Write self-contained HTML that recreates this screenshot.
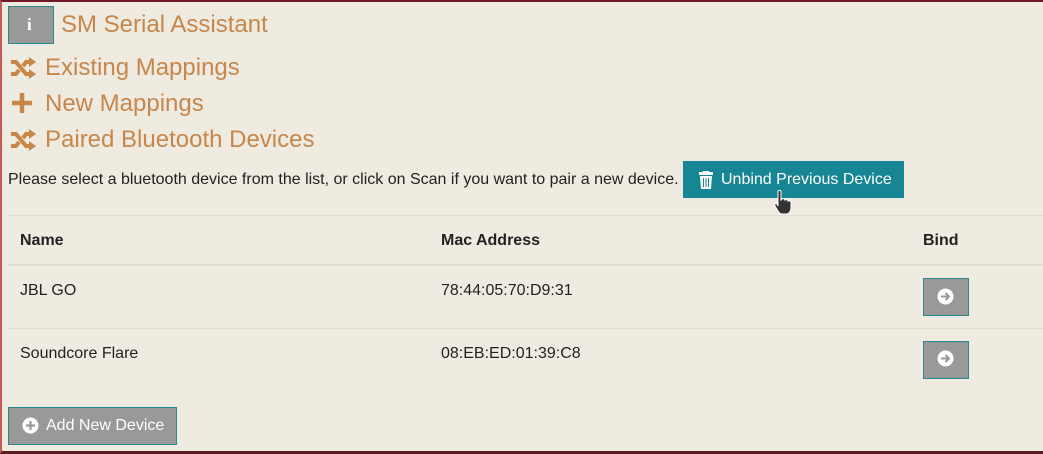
<!DOCTYPE html>
<html><head><meta charset="utf-8"><style>
*{margin:0;padding:0;box-sizing:border-box}
html,body{width:1043px;height:454px;overflow:hidden;background:#efebe0;font-family:"Liberation Sans",sans-serif}
.frame{position:absolute;left:0;top:0;width:1043px;height:454px;border-top:2px solid #6e1a24;border-left:2px solid #c85a5a;border-bottom:3px solid #5a1a20}
.a{position:absolute;white-space:nowrap}
.t{color:#c8864a;font-size:24px}
.b{font-size:16px;color:#222}
.hl{position:absolute;left:8px;right:0;background:#e2ded3}
.gbtn{position:absolute;background:#999;border:1px solid #2a8a8a}
</style></head><body><div class="frame"></div>
<div class="gbtn" style="left:8px;top:6px;width:46px;height:38px;"></div>
<div class="a" style="left:27px;top:15px;color:#fff;font-family:'Liberation Serif',serif;font-weight:bold;font-size:17px">i</div>
<div class="a t" style="left:61px;top:11px">SM Serial Assistant</div>

<svg class="a" style="left:10px;top:57px" width="26" height="22" viewBox="0 0 26 22"><g fill="none" stroke="#c8864a" stroke-width="4"><path d="M1 5h5l10 12h5M1 17h5l3-4M13 9l3-4h5"/></g><path d="M19 0l7 5-7 5zM19 12l7 5-7 5z" fill="#c8864a"/></svg>
<div class="a t" style="left:45px;top:54px">Existing Mappings</div>
<svg class="a" style="left:11px;top:92px" width="22" height="22"><path d="M11 1v20M1 11h20" stroke="#c8864a" stroke-width="4.5"/></svg>
<div class="a t" style="left:45px;top:90px">New Mappings</div>
<svg class="a" style="left:10px;top:129px" width="26" height="22" viewBox="0 0 26 22"><g fill="none" stroke="#c8864a" stroke-width="4"><path d="M1 5h5l10 12h5M1 17h5l3-4M13 9l3-4h5"/></g><path d="M19 0l7 5-7 5zM19 12l7 5-7 5z" fill="#c8864a"/></svg>
<div class="a t" style="left:45px;top:126px">Paired Bluetooth Devices</div>

<div class="a b" style="left:8px;top:171px">Please select a bluetooth device from the list, or click on Scan if you want to pair a new device.</div>
<div class="a" style="left:683px;top:161px;width:221px;height:37px;background:#168594"></div>
<svg class="a" style="left:698px;top:171px" width="16" height="18"><rect x="1" y="1" width="14" height="3" fill="#fff"/><rect x="5" y="0" width="6" height="2" fill="#fff"/><path d="M2 5h12l-1 13H3z" fill="#fff"/><path d="M5.5 7v9M8 7v9M10.5 7v9" stroke="#168594" stroke-width="1"/></svg>
<div class="a" style="left:721px;top:171px;color:#fff;font-size:16px">Unbind Previous Device</div>
<svg class="a" style="left:773px;top:189px" width="20" height="26" viewBox="0 0 20 26"><path d="M5 2c1-1 3-1 3 1v8l1-1c1-1 3 0 3 1 1-1 3 0 3 1 1-1 3 0 3 2v5c0 3-2 6-5 6H9c-2 0-3-1-4-3l-3-5c-1-2 1-3 2-2l1 2z" fill="#333" stroke="#fff" stroke-width="1"/></svg>

<div class="hl" style="top:215px;height:1px"></div>
<div class="a b" style="left:20px;top:232px;font-weight:bold">Name</div>
<div class="a b" style="left:441px;top:232px;font-weight:bold">Mac Address</div>
<div class="a b" style="left:923px;top:232px;font-weight:bold">Bind</div>
<div class="hl" style="top:264px;height:2px"></div>
<div class="a b" style="left:20px;top:282px">JBL GO</div>
<div class="a b" style="left:441px;top:282px">78:44:05:70:D9:31</div>
<div class="gbtn" style="left:923px;top:278px;width:46px;height:38px"></div>
<svg class="a" style="left:937px;top:288px" width="17" height="17"><circle cx="8.5" cy="8.5" r="8" fill="#fff"/><path d="M4 8.5h8M8.5 5l3.5 3.5-3.5 3.5" stroke="#999" stroke-width="2" fill="none"/></svg>
<div class="hl" style="top:328px;height:1px"></div>
<div class="a b" style="left:20px;top:345px">Soundcore Flare</div>
<div class="a b" style="left:441px;top:345px">08:EB:ED:01:39:C8</div>
<div class="gbtn" style="left:923px;top:341px;width:46px;height:38px"></div>
<svg class="a" style="left:937px;top:350px" width="17" height="17"><circle cx="8.5" cy="8.5" r="8" fill="#fff"/><path d="M4 8.5h8M8.5 5l3.5 3.5-3.5 3.5" stroke="#999" stroke-width="2" fill="none"/></svg>

<div class="gbtn" style="left:8px;top:407px;width:169px;height:38px"></div>
<svg class="a" style="left:22px;top:417px" width="17" height="17"><circle cx="8.5" cy="8.5" r="8" fill="#fff"/><path d="M8.5 4v9M4 8.5h9" stroke="#999" stroke-width="2.2"/></svg>
<div class="a" style="left:46px;top:417px;color:#fff;font-size:16px">Add New Device</div>
</body></html>
